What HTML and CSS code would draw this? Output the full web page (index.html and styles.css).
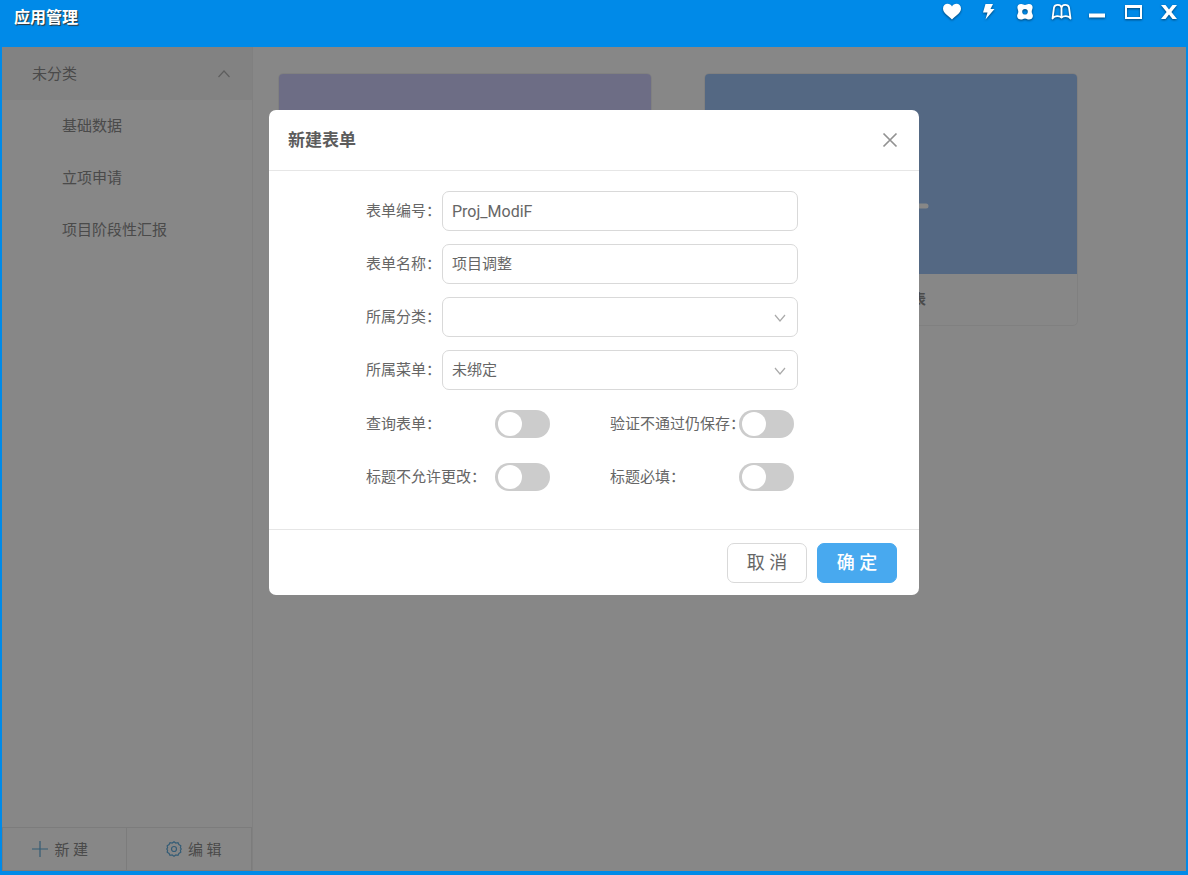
FILE: index.html
```html
<!DOCTYPE html>
<html lang="zh-CN">
<head>
<meta charset="utf-8">
<meta name="viewport" content="width=device-width, initial-scale=1">
<title>应用管理</title>
<link rel="stylesheet" href="styles.css">
</head>
<body>
<div class="window">
  <header class="titlebar">
    <h1 class="titlebar-name">应用管理</h1>
    <div class="titlebar-tools">
      <button class="tool" type="button" aria-label="收藏"><svg width="20" height="18" viewBox="0 0 20 18"><path fill="#fff" d="M9 16.500C6 13 0 10.500 0 5.500C0 2.500 2.200 .8 4.500 .8C6.500 .8 8.200 2 9 3.400C9.800 2 11.500 .8 13.500 .8C15.800 .8 18 2.500 18 5.500C18 10.500 12 13 9 16.500Z"/></svg></button>
      <button class="tool" type="button" aria-label="快捷"><svg width="20" height="18" viewBox="0 0 20 18"><path fill="#fff" d="M6.500 1H14L11.500 6H15.500L6.500 16.500L8.500 9.500H4Z"/></svg></button>
      <button class="tool" type="button" aria-label="设置"><svg width="20" height="18" viewBox="0 0 20 18"><path fill="#fff" fill-rule="evenodd" d="M6 1C7.800 .8 8.500 2 10 2S12.200 .8 14 1C16.300 1.200 17.800 2.600 17.600 4.600C17.600 6.200 16.700 7 16.700 8.700S18 11.400 17.900 13C17.800 15.400 16 16.600 14 16.600C12.300 16.600 11.500 15.500 10 15.500S7.700 16.600 6 16.600C4 16.600 2.200 15.400 2.100 13C2 11.400 3.300 10.400 3.300 8.700S2.400 6.200 2.400 4.600C2.200 2.600 3.700 1.200 6 1ZM10 6A2.800 2.800 0 1 0 10 11.600A2.800 2.800 0 1 0 10 6Z"/></svg></button>
      <button class="tool" type="button" aria-label="帮助"><svg width="22" height="18" viewBox="0 0 22 18"><path fill="none" stroke="#fff" stroke-width="1.800" stroke-linejoin="round" d="M11.500 14V5C11 1 5 1 4 4.500L2.500 15.500C4.500 12.500 9.500 12.500 11.500 14.500C13.500 12.500 18.500 12.500 20.500 15.500L19 4.500C18 1 12 1 11.500 5"/></svg></button>
      <button class="tool" type="button" aria-label="最小化"><svg width="20" height="18" viewBox="0 0 20 18"><path fill="#fff" d="M2 10.500H18V14.500H2Z"/></svg></button>
      <button class="tool" type="button" aria-label="最大化"><svg width="20" height="18" viewBox="0 0 20 18"><path fill="#fff" fill-rule="evenodd" d="M2 2H19V16H2ZM4 5V14H17V5Z"/></svg></button>
      <button class="tool" type="button" aria-label="关闭窗口"><svg width="20" height="18" viewBox="0 0 20 18"><path fill="#fff" d="M2 2H6.500L10 6.500L13.500 2H18L12.400 9L18 16H13.500L10 11.500L6.500 16H2L7.600 9Z"/></svg></button>
    </div>
  </header>

  <div class="workspace">
    <aside class="sidebar">
      <button class="group" type="button" aria-expanded="true"><span class="group-name">未分类</span>
        <svg width="14" height="10" viewBox="0 0 14 10"><path fill="none" stroke="#999" stroke-width="1.200" d="M1.500 8L7 2L12.500 8"/></svg>
      </button>
      <nav class="group-items">
        <a class="item" href="#">基础数据</a>
        <a class="item" href="#">立项申请</a>
        <a class="item" href="#">项目阶段性汇报</a>
      </nav>
      <div class="sidebar-actions">
        <button class="action" type="button"><svg width="16" height="16" viewBox="0 0 16 16"><path stroke="#2d8fce" stroke-width="1.200" d="M8 0V16M0 8H16"/></svg><span class="action-name">新 建</span></button>
        <button class="action action-edit" type="button"><svg width="16" height="16" viewBox="0 0 16 16"><g fill="none" stroke="#3094d4" stroke-width="1.200"><path d="M8 .8L9.800 2L12 1.700L12.900 3.600L14.800 4.700L14.400 6.800L15.300 8L14.400 9.200L14.800 11.300L12.900 12.400L12 14.300L9.800 14L8 15.200L6.200 14L4 14.300L3.100 12.400L1.200 11.300L1.600 9.200L.7 8L1.600 6.800L1.200 4.700L3.100 3.600L4 1.700L6.200 2Z"/><circle cx="8" cy="8" r="2.500"/></g></svg><span class="action-name">编 辑</span></button>
      </div>
    </aside>

    <main class="cards">
      <article class="card">
        <div class="card-cover card-cover-violet"></div>
        <h2 class="card-name"></h2>
      </article>
      <article class="card">
        <div class="card-cover card-cover-blue"><svg width="76" height="76" viewBox="0 0 76 76"><path stroke="#fff" stroke-width="5" stroke-linecap="round" d="M38 3V73M3 38H73"/></svg></div>
        <h2 class="card-name">新建空白表</h2>
      </article>
    </main>

    <div class="mask">
      <form class="dialog" role="dialog" aria-labelledby="dialog-title">
        <header class="dialog-head">
          <h2 class="dialog-title" id="dialog-title">新建表单</h2>
          <button class="dialog-close" type="button" aria-label="关闭"><svg width="16" height="16" viewBox="0 0 16 16"><path stroke="#929292" stroke-width="1.700" d="M1.500 1.500L14.500 14.500M14.500 1.500L1.500 14.500"/></svg></button>
        </header>
        <div class="fields">
          <div class="field"><label class="label" for="code">表单编号：</label><input class="control control-code" id="code" type="text" value="Proj_ModiF"></div>
          <div class="field"><label class="label" for="name">表单名称：</label><input class="control control-name" id="name" type="text" value="项目调整"></div>
          <div class="field"><label class="label" for="category">所属分类：</label>
            <div class="select"><select class="control" id="category"><option></option></select><svg class="select-arrow" width="12" height="8" viewBox="0 0 12 8"><path fill="none" stroke="#aaa" stroke-width="1.200" d="M1 1L6 7L11 1"/></svg></div></div>
          <div class="field"><label class="label" for="menu">所属菜单：</label>
            <div class="select"><select class="control" id="menu"><option>未绑定</option></select><svg class="select-arrow" width="12" height="8" viewBox="0 0 12 8"><path fill="none" stroke="#aaa" stroke-width="1.200" d="M1 1L6 7L11 1"/></svg></div></div>
          <div class="switches">
            <div class="toggle"><label class="label" for="query">查询表单：</label><input class="switch" id="query" type="checkbox" role="switch"></div>
            <div class="toggle"><label class="label" for="force">验证不通过仍保存：</label><input class="switch" id="force" type="checkbox" role="switch"></div>
            <div class="toggle"><label class="label" for="lock">标题不允许更改：</label><input class="switch" id="lock" type="checkbox" role="switch"></div>
            <div class="toggle"><label class="label" for="required">标题必填：</label><input class="switch" id="required" type="checkbox" role="switch"></div>
          </div>
        </div>
        <footer class="dialog-foot">
          <button class="button" type="button">取 消</button>
          <button class="button button-primary" type="submit">确 定</button>
        </footer>
      </form>
    </div>
  </div>
</div>
</body>
</html>
```

FILE: styles.css
```css
* {
  box-sizing: border-box;
}

body {
  margin: 0;
  font-family: Roboto, "Noto Sans CJK SC", sans-serif;
  font-size: 15px;
  color: #666;
}

h1,
h2 {
  margin: 0;
}

button,
input,
select {
  margin: 0;
  font: inherit;
  color: inherit;
}

button {
  padding: 0;
  border: 0;
  background: none;
  cursor: pointer;
}

svg {
  display: block;
  flex: none;
}

.window {
  display: flex;
  flex-direction: column;
  min-height: 100vh;
  padding: 0 2px 4px;
  background: #008ae8;
}

/* Title bar */

.titlebar {
  display: flex;
  justify-content: space-between;
  align-items: flex-start;
  min-height: 47px;
  padding: 3px 7px 0 12px;
}

.titlebar-name {
  padding-top: 3px;
  font-size: 16px;
  line-height: 24px;
  color: #fff;
  text-shadow: 1px 1px 1px #333;
}

.titlebar-tools {
  display: flex;
  gap: 16px;
}

.tool {
  display: flex;
  justify-content: center;
  width: 20px;
  filter: drop-shadow(0 1px 1px rgba(0, 0, 0, .5));
}

/* Workspace */

.workspace {
  position: relative;
  display: flex;
  flex: 1;
  background: #fff;
}

.sidebar {
  display: flex;
  flex-direction: column;
  width: 251px;
  flex: none;
  border-right: 1px solid #ededed;
}

.group {
  display: flex;
  justify-content: space-between;
  align-items: center;
  height: 53px;
  padding: 0 21px 0 30px;
  background: #f3f3f3;
}

.group-name,
.action-name {
  padding-bottom: 2px;
}

.group-items {
  display: flex;
  flex-direction: column;
  flex: 1;
}

.item {
  padding-left: 60px;
  line-height: 52px;
  color: inherit;
  text-decoration: none;
}

.sidebar-actions {
  display: flex;
  height: 44px;
  border: 1px solid #e3e3e3;
}

.action {
  display: flex;
  flex: 1;
  justify-content: center;
  align-items: center;
  gap: 6px;
  padding-right: 8px;
}

.action-edit {
  padding: 0 0 0 10px;
  border-left: 1px solid #e3e3e3;
}

.cards {
  display: grid;
  flex: 1;
  grid-template-columns: repeat(auto-fill, 374px);
  align-content: start;
  gap: 52px;
  padding: 26px 25px;
}

.card {
  overflow: hidden;
  border: 1px solid #eee;
  border-radius: 5px;
}

.card-cover {
  display: flex;
  justify-content: center;
  align-items: center;
  height: 200px;
  padding-top: 64px;
}

.card-cover-violet {
  background: #bebefa;
}

.card-cover-blue {
  background: #7fb2f5;
}

.card-name {
  min-height: 51px;
  font-size: 14px;
  line-height: 51px;
  text-align: center;
}

/* Dialog */

.mask {
  position: absolute;
  inset: 0;
  display: flex;
  justify-content: center;
  align-items: flex-start;
  padding-top: 63px;
  background: rgba(55, 55, 55, .6);
}

.dialog {
  width: 650px;
  max-width: 100%;
  border-radius: 7px;
  background: #fff;
}

.dialog-head {
  display: flex;
  justify-content: space-between;
  align-items: center;
  height: 61px;
  padding: 0 20px 0 19px;
  border-bottom: 1px solid #e6e6e6;
}

.dialog-title {
  padding-bottom: 3px;
  font-size: 17px;
  color: #5c5c5c;
}

.dialog-close {
  padding: 1px;
}

.fields {
  display: flex;
  flex-direction: column;
  gap: 13px;
  padding: 20px 121px 32px 97px;
}

.field {
  display: flex;
  align-items: center;
  justify-content: space-between;
}

.label {
  line-height: 40px;
  white-space: nowrap;
}

.select,
.field > .control {
  width: 356px;
}

.select {
  position: relative;
}

.control {
  width: 100%;
  height: 40px;
  padding: 0 9px;
  border: 1px solid #d9d9d9;
  border-radius: 7px;
  background: #fff;
  appearance: none;
}

.control-code {
  font-size: 16px;
}

.control-name {
  padding-bottom: 3px;
}

.select-arrow {
  position: absolute;
  top: 17px;
  right: 12px;
  pointer-events: none;
}

.switches {
  display: grid;
  grid-template-columns: 184px 184px;
  gap: 13px 60px;
  padding-top: 1px;
}

.toggle {
  display: grid;
  grid-template-columns: 129px 55px;
  align-items: center;
  height: 40px;
}

.switch {
  display: flex;
  align-items: center;
  width: 55px;
  height: 28px;
  padding-left: 3px;
  border-radius: 14px;
  background: #ccc;
  appearance: none;
}

.switch::before {
  content: "";
  width: 24px;
  height: 24px;
  border-radius: 50%;
  background: #fff;
}

.switch:checked {
  justify-content: flex-end;
  background: #48a9ef;
}

.dialog-foot {
  display: flex;
  justify-content: flex-end;
  gap: 10px;
  padding: 13px 22px 12px;
  border-top: 1px solid #e6e6e6;
}

.button {
  width: 80px;
  height: 40px;
  padding-bottom: 4px;
  border: 1px solid #d9d9d9;
  border-radius: 7px;
  font-size: 18px;
}

.button-primary {
  border-color: #48a9ef;
  background: #48a9ef;
  font-weight: 500;
  color: #fff;
}
```
